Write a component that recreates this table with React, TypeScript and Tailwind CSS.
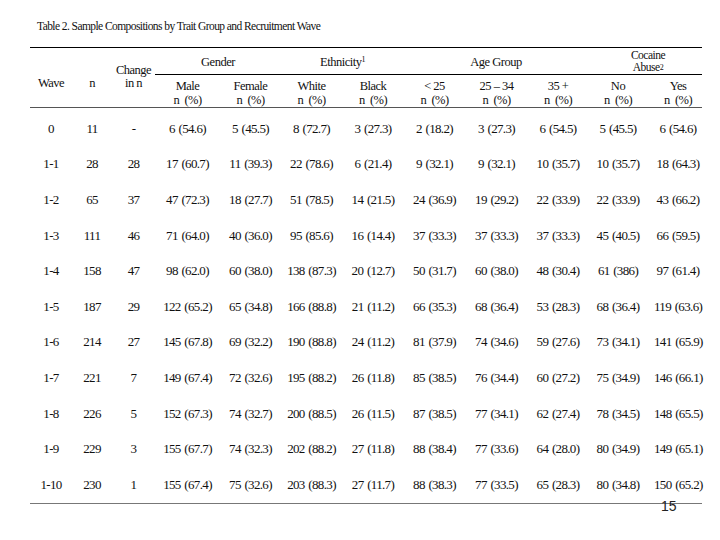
const cols = 'grid grid-cols-[42px_40px_43px_65px_61px_61px_62px_61px_63px_60px_60px_54px]';

const rows: string[][] = [
  ['0', '11', '-', '6 (54.6)', '5 (45.5)', '8 (72.7)', '3 (27.3)', '2 (18.2)', '3 (27.3)', '6 (54.5)', '5 (45.5)', '6 (54.6)'],
  ['1-1', '28', '28', '17 (60.7)', '11 (39.3)', '22 (78.6)', '6 (21.4)', '9 (32.1)', '9 (32.1)', '10 (35.7)', '10 (35.7)', '18 (64.3)'],
  ['1-2', '65', '37', '47 (72.3)', '18 (27.7)', '51 (78.5)', '14 (21.5)', '24 (36.9)', '19 (29.2)', '22 (33.9)', '22 (33.9)', '43 (66.2)'],
  ['1-3', '111', '46', '71 (64.0)', '40 (36.0)', '95 (85.6)', '16 (14.4)', '37 (33.3)', '37 (33.3)', '37 (33.3)', '45 (40.5)', '66 (59.5)'],
  ['1-4', '158', '47', '98 (62.0)', '60 (38.0)', '138 (87.3)', '20 (12.7)', '50 (31.7)', '60 (38.0)', '48 (30.4)', '61 (386)', '97 (61.4)'],
  ['1-5', '187', '29', '122 (65.2)', '65 (34.8)', '166 (88.8)', '21 (11.2)', '66 (35.3)', '68 (36.4)', '53 (28.3)', '68 (36.4)', '119 (63.6)'],
  ['1-6', '214', '27', '145 (67.8)', '69 (32.2)', '190 (88.8)', '24 (11.2)', '81 (37.9)', '74 (34.6)', '59 (27.6)', '73 (34.1)', '141 (65.9)'],
  ['1-7', '221', '7', '149 (67.4)', '72 (32.6)', '195 (88.2)', '26 (11.8)', '85 (38.5)', '76 (34.4)', '60 (27.2)', '75 (34.9)', '146 (66.1)'],
  ['1-8', '226', '5', '152 (67.3)', '74 (32.7)', '200 (88.5)', '26 (11.5)', '87 (38.5)', '77 (34.1)', '62 (27.4)', '78 (34.5)', '148 (65.5)'],
  ['1-9', '229', '3', '155 (67.7)', '74 (32.3)', '202 (88.2)', '27 (11.8)', '88 (38.4)', '77 (33.6)', '64 (28.0)', '80 (34.9)', '149 (65.1)'],
  ['1-10', '230', '1', '155 (67.4)', '75 (32.6)', '203 (88.3)', '27 (11.7)', '88 (38.3)', '77 (33.5)', '65 (28.3)', '80 (34.8)', '150 (65.2)'],
];

const subHeads = ['Male', 'Female', 'White', 'Black', '< 25', '25 \u2013 34', '35 +', 'No', 'Yes'];

export default function App() {
  return (
    <div className="relative w-[720px] h-[540px] bg-white text-[#111] overflow-hidden font-['Liberation_Serif','Times_New_Roman',serif]">
      <div className="pl-[37px] pt-[19px] text-[11.5px] leading-[14px] tracking-[-0.05em]">
        Table 2. Sample Compositions by Trait Group and Recruitment Wave
      </div>

      <div className="ml-[30px] mt-[14px] w-[672px]">
        {/* header */}
        <div className={`${cols} grid-rows-[27px_32px] border-t-[1.5px] border-b-[1.5px] border-t-black border-b-[#555] text-[12.5px] leading-[13px] tracking-[-0.04em]`}>
          <div className="row-span-2 text-center pt-[29px]">Wave</div>
          <div className="row-span-2 text-center pt-[29px]">n</div>
          <div className="row-span-2 text-center pt-[16px]">
            Change
            <br />
            in n
          </div>
          <div className="col-span-2 flex items-center justify-center border-b border-black pt-[2px]">Gender</div>
          <div className="col-span-2 flex items-center justify-center border-b border-black pt-[2px]">
            Ethnicity<sup className="text-[8px] relative -top-[2px]">1</sup>
          </div>
          <div className="col-span-3 flex items-center justify-center border-b border-black pt-[2px]">Age Group</div>
          <div className="col-span-2 flex flex-col items-center justify-center border-b border-black text-[11.5px] leading-[12px] pl-[6px]">
            <span>Cocaine</span>
            <span>
              Abuse<sup className="text-[8px] leading-none relative -top-[1px]">2</sup>
            </span>
          </div>
          {subHeads.map((h, i) => (
            <div key={h} className={`flex flex-col items-center pt-[4px] leading-[14px] whitespace-nowrap ${i === 8 ? 'pl-[6px]' : ''}`}>
              <span>{h}</span>
              <span>n&nbsp; (%)</span>
            </div>
          ))}
        </div>

        {/* body */}
        <div className="pt-[3px] border-b border-[#777] text-[13px] tracking-[-0.05em] [word-spacing:1px]">
          {rows.map((r) => (
            <div key={r[0]} className={`${cols} h-[35.6px] items-center`}>
              {r.map((c, i) => (
                <div key={i} className={`text-center leading-[14px] whitespace-nowrap ${i === 11 ? 'pl-[6px]' : ''}`}>
                  {c}
                </div>
              ))}
            </div>
          ))}
        </div>
      </div>

      <div className="absolute left-[661px] top-[498px] text-[14px] leading-[16px] font-['Liberation_Sans',Arial,sans-serif] text-[#222]">
        15
      </div>
    </div>
  );
}
